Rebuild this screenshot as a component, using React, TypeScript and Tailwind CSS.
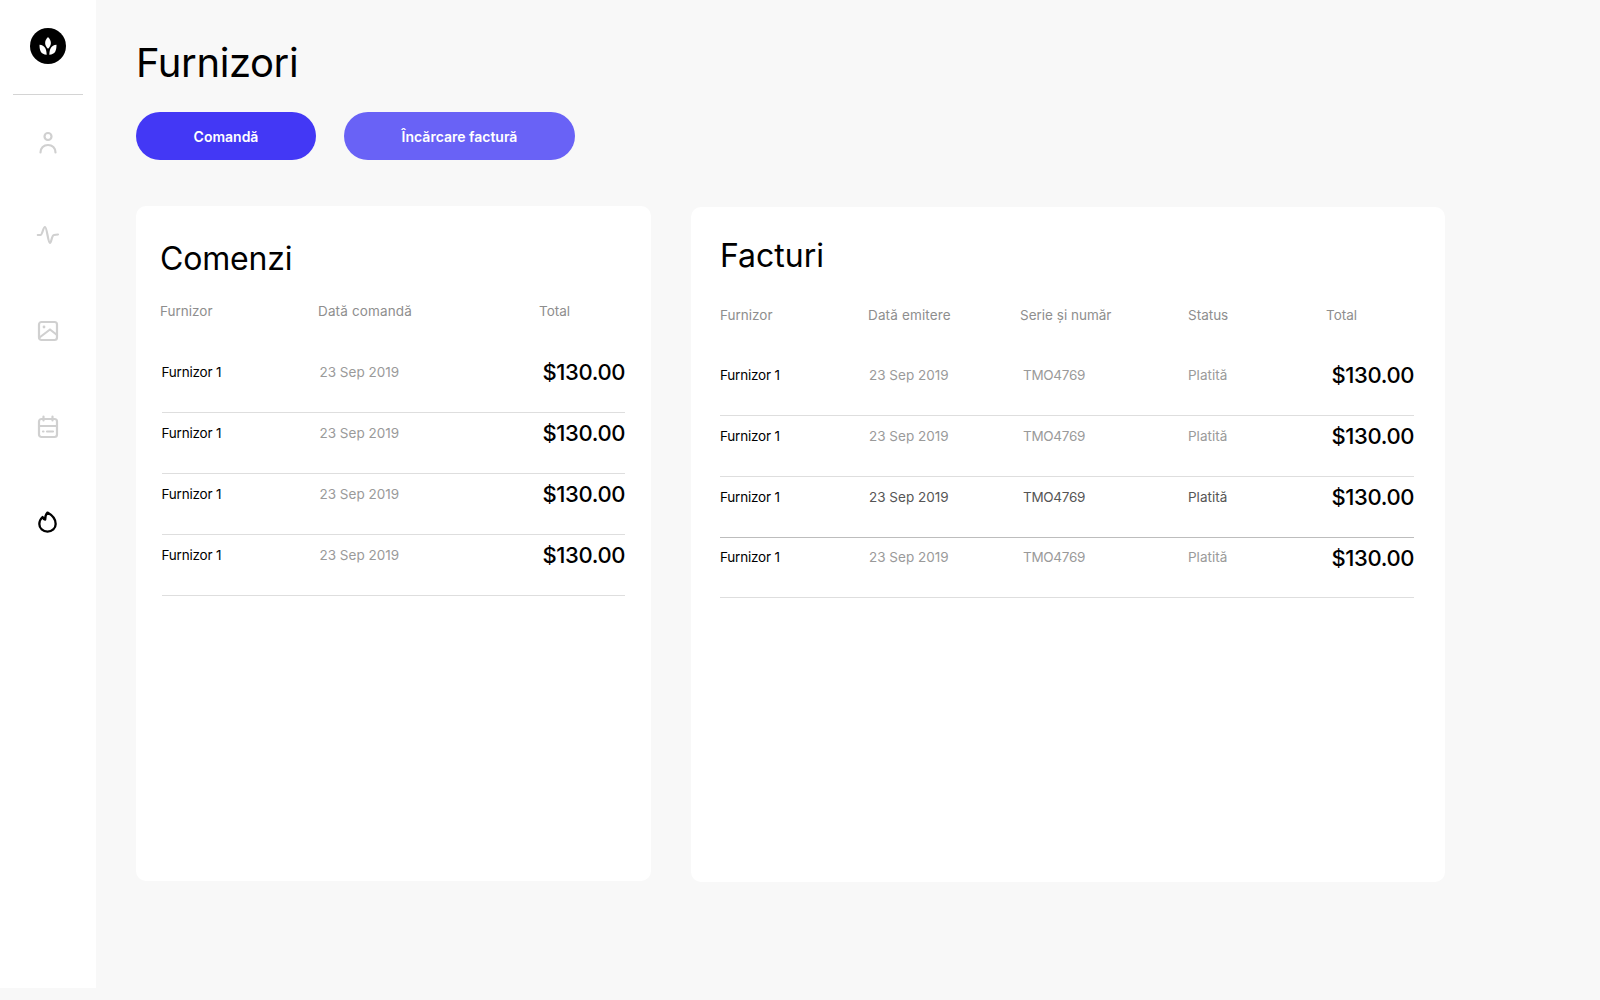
import React from "react";

const font = "[font-family:'Inter','Noto_Sans',sans-serif]";

function Logo() {
  return (
    <svg width="36" height="36" viewBox="0 0 36 36" className="block">
      <circle cx="18" cy="18" r="18" fill="#000" />
      <path d="M18 9c1.900 2.200 2.900 4 2.900 5.900 0 2.100-1.100 3.900-2.900 5.800-1.800-1.900-2.900-3.700-2.900-5.800 0-1.900 1-3.700 2.900-5.900z" fill="#fff" />
      <path d="M9.500 16.800c2.700.3 4.600 1.300 5.700 3.100.9 1.500 1.300 3.500 1.500 6.900-2.800-.3-4.800-1.300-5.900-3.100-.9-1.600-1.300-3.600-1.300-6.900z" fill="#fff" />
      <path d="M26.500 16.800c-2.700.3-4.600 1.300-5.700 3.100-.9 1.500-1.300 3.500-1.500 6.900 2.800-.3 4.800-1.300 5.900-3.100.9-1.600 1.300-3.600 1.300-6.900z" fill="#fff" />
    </svg>
  );
}

function Person() {
  return (
    <svg width="20" height="24" viewBox="0 0 20 24" fill="none" stroke="#d0d0d0" strokeWidth="2.200" strokeLinecap="round">
      <circle cx="10" cy="5.500" r="3.500" />
      <path d="M2.500 21.500c0-4.500 3.200-7.500 7.500-7.500s7.500 3 7.500 7.500" />
    </svg>
  );
}

function Pulse() {
  return (
    <svg width="24" height="20" viewBox="0 0 24 20" fill="none" stroke="#d0d0d0" strokeWidth="2.200" strokeLinecap="round" strokeLinejoin="round">
      <path d="M1.800 10 L4.500 10 C6.500 10 7 2 9 2 C11 2 12 18 14 18 C15.500 18 15.500 10.500 18 10 L22 9.500" />
    </svg>
  );
}

function ImageIcon() {
  return (
    <svg width="22" height="22" viewBox="0 0 22 22" fill="none" stroke="#d0d0d0" strokeWidth="2.200" strokeLinejoin="round" strokeLinecap="round">
      <rect x="2" y="2" width="18" height="18" rx="2.500" />
      <circle cx="7" cy="7" r="1.400" fill="#d0d0d0" stroke="none" />
      <path d="M2.500 17.500 L13 9.500 L20 15" />
    </svg>
  );
}

function CalendarIcon() {
  return (
    <svg width="22" height="24" viewBox="0 0 22 24" fill="none" stroke="#d0d0d0" strokeWidth="2.200" strokeLinecap="round">
      <rect x="2" y="4" width="18" height="18" rx="2.500" />
      <path d="M2 11h18M6.500 1.500v4M15.500 1.500v4" />
      <path d="M6 16.500h.5M10 16.500h6" />
    </svg>
  );
}

function Flame() {
  return (
    <svg width="19" height="22" viewBox="0 0 18 21" fill="none" stroke="#000" strokeWidth="2.200" strokeLinejoin="round">
      <path d="M9 1.500 C13.500 4 16.800 8 16.800 12.300 C16.800 16.500 13.400 19.600 9 19.600 C4.600 19.600 1.200 16.500 1.200 12.300 C1.200 9.800 2.400 7.500 4.300 5.700 C4.800 7.200 5.600 8 6.800 8.200 C6.600 5.800 7.300 3.500 9 1.500 Z" />
    </svg>
  );
}

function Sidebar() {
  return (
    <aside className="w-[96px] h-[988px] bg-white shrink-0 flex flex-col items-center">
      <div className="mt-[28px]"><Logo /></div>
      <div className="mt-[30px] w-[70px] h-px bg-[#d4d4d4]" />
      <div className="mt-[36px] h-[24px] flex items-center justify-center"><Person /></div>
      <div className="mt-[70px] h-[20px] flex items-center justify-center"><Pulse /></div>
      <div className="mt-[75px] h-[22px] flex items-center justify-center"><ImageIcon /></div>
      <div className="mt-[73px] h-[24px] flex items-center justify-center"><CalendarIcon /></div>
      <div className="mt-[72px] h-[22px] flex items-center justify-center pr-[1px]"><Flame /></div>
    </aside>
  );
}

const orders = [0, 1, 2, 3];

function Comenzi() {
  return (
    <section className="w-[515px] h-[675px] bg-white rounded-[10px] pl-[24px] pr-[26px] pt-[33px]">
      <h2 className="text-[32px] leading-[40px] font-normal tracking-[-0.2px] text-black">Comenzi</h2>
      <div className="mt-[22px] grid grid-cols-[158px_221px_1fr] h-[18px] items-center text-[13.500px] text-[#8e8e8e]">
        <span>Furnizor</span>
        <span className="tracking-[0.15px]">Dată comandă</span>
        <span>Total</span>
      </div>
      <div className="mt-[33px] ml-[1.500px]">
        {orders.map((i) => (
          <div key={i} className="grid grid-cols-[158px_1fr_auto] items-center h-[61px] pb-[20px] border-b border-[#dedede]">
            <span className="text-[13.500px] tracking-[-0.2px] text-black">Furnizor 1</span>
            <span className="text-[13.500px] text-[#9a9a9a]">23 Sep 2019</span>
            <span className="text-[22px] leading-[28px] font-medium tracking-[-0.4px] text-black">$130.00</span>
          </div>
        ))}
      </div>
    </section>
  );
}

function Facturi() {
  return (
    <section className="w-[754px] h-[675px] bg-white rounded-[10px] pl-[29px] pr-[31px] pt-[29px] mt-px">
      <h2 className="text-[32px] leading-[40px] font-normal text-black">Facturi</h2>
      <div className="mt-[29px] grid grid-cols-[148px_152px_168px_138px_1fr] h-[18px] items-center text-[13.500px] text-[#8e8e8e]">
        <span>Furnizor</span>
        <span className="tracking-[0.15px]">Dată emitere</span>
        <span>Serie și număr</span>
        <span>Status</span>
        <span>Total</span>
      </div>
      <div className="mt-[32px]">
        {orders.map((i) => {
          const dark = i === 2;
          const tone = dark ? "text-[#555555]" : "text-[#9a9a9a]";
          return (
            <div
              key={i}
              className={`grid grid-cols-[149px_154px_165px_1fr_auto] items-center h-[61px] last:h-[60px] pb-[20px] border-b ${dark ? "border-[#bdbdbd]" : "border-[#dedede]"}`}
            >
              <span className="text-[13.500px] tracking-[-0.2px] text-black">Furnizor 1</span>
              <span className={`text-[13.500px] ${tone}`}>23 Sep 2019</span>
              <span className={`text-[13.500px] tracking-[-0.3px] ${tone}`}>TMO4769</span>
              <span className={`text-[13.500px] ${tone}`}>Platită</span>
              <span className="text-[22px] leading-[28px] font-medium tracking-[-0.4px] text-black">$130.00</span>
            </div>
          );
        })}
      </div>
    </section>
  );
}

export default function App() {
  return (
    <div className={`w-[1600px] h-[1000px] overflow-hidden bg-[#f8f8f8] flex items-start ${font}`}>
      <Sidebar />
      <main className="pl-[40px] pt-[39px]">
        <h1 className="text-[40px] leading-[48px] font-normal tracking-[-0.4px] text-black">Furnizori</h1>
        <div className="mt-[25px] flex gap-[28px]">
          <button className="w-[180px] h-[48px] rounded-full bg-[#4338f5] text-white text-[14px] font-semibold">Comandă</button>
          <button className="w-[231px] h-[48px] rounded-full bg-[#6962f6] text-white text-[14px] font-semibold">Încărcare factură</button>
        </div>
        <div className="mt-[46px] flex items-start gap-[40px]">
          <Comenzi />
          <Facturi />
        </div>
      </main>
    </div>
  );
}
